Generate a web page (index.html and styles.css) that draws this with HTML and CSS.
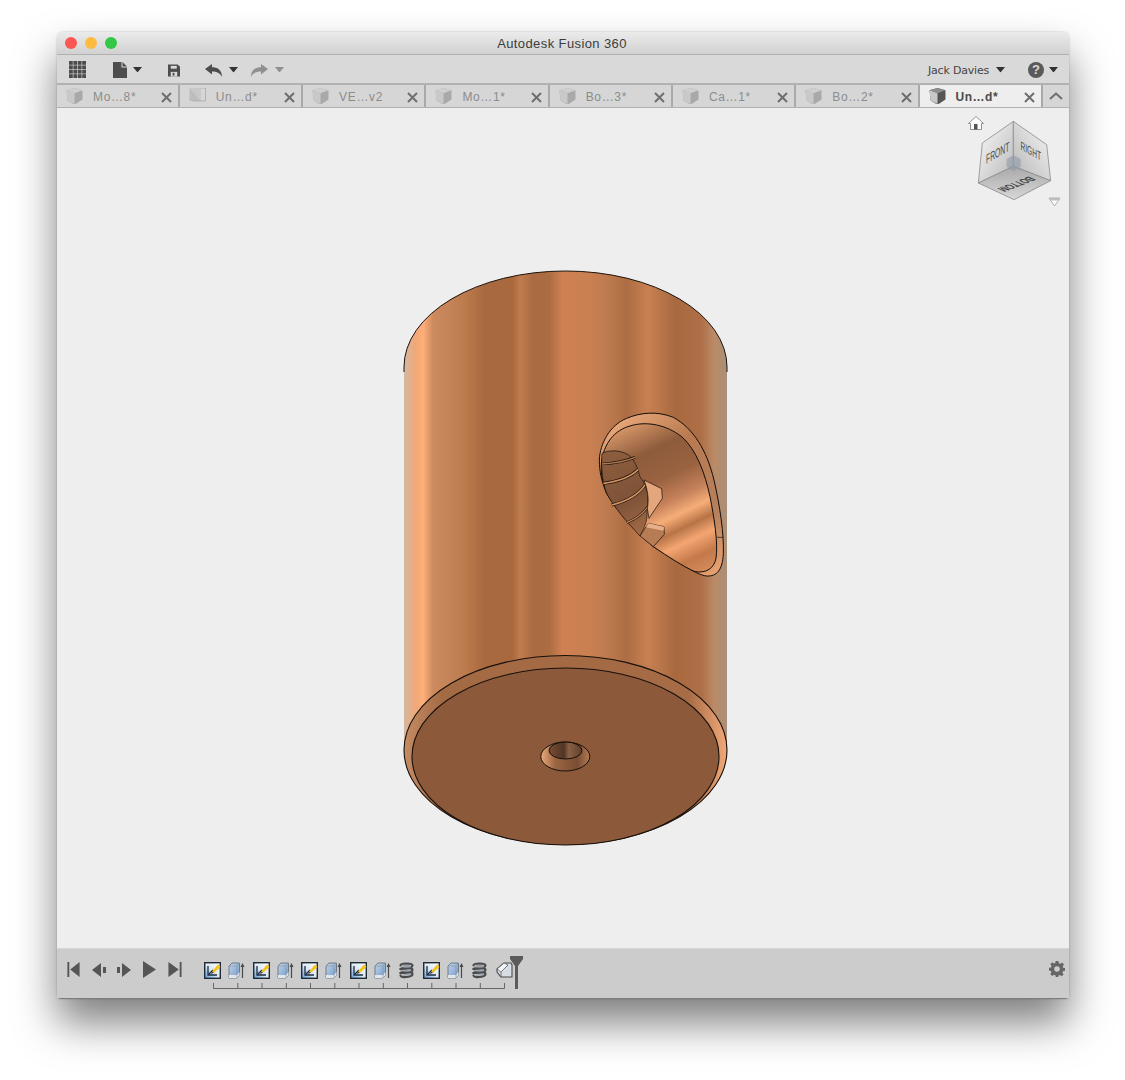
FILE: index.html
```html
<!DOCTYPE html>
<html lang="en">
<head>
<meta charset="utf-8">
<title>Autodesk Fusion 360</title>
<link rel="stylesheet" href="styles.css">
</head>
<body>
<svg class="defs" width="0" height="0" aria-hidden="true">
  <defs>
    <linearGradient id="sketchBg" x1="1" y1="0" x2="0" y2="1"><stop offset="0" stop-color="#fff"/><stop offset=".55" stop-color="#dbe7f3"/><stop offset="1" stop-color="#5f9bd6"/></linearGradient>
    <linearGradient id="extrudeBg" x1="0" y1="0" x2="1" y2="1"><stop offset="0" stop-color="#c3d6ec"/><stop offset="1" stop-color="#7098c8"/></linearGradient>
    <symbol id="cube" viewBox="1 1 14 14">
      <path d="M1 3 8 1 15 3 15 11 9 15 7 15 2 12Z" fill="#a9a9a9"/>
      <path d="M1 3 8 5.500 15 3 8 1Z" fill="#cfcfcf"/>
      <path d="M1 3 8 5.500 8 15 2 12Z" fill="#c9c9c9"/>
    </symbol>
    <symbol id="cube-active" viewBox="1 1 14 14">
      <path d="M1 3 8 1 15 3 15 11 9 15 7 15 2 12Z" fill="#555"/>
      <path d="M1 3 8 5.500 15 3 8 1Z" fill="#8d8d8d"/>
      <path d="M1 3 8 5.500 8 15 2 12Z" fill="#c8c8c8"/>
    </symbol>
    <symbol id="plane" viewBox="0 0 16 16">
      <path d="M0 0 11 0 11 13 0 13Z" fill="#bdbdbd"/>
      <path d="M0 0 11 0 11 13Z" fill="#c8c8c8"/>
      <path d="M11 0 16 0 16 13 3 13" fill="none" stroke="#aaa" stroke-width=".8"/>
    </symbol>
    <symbol id="close" viewBox="0 0 11 11">
      <path d="M1 1 10 10M10 1 1 10" stroke="#6e6e6e" stroke-width="2" fill="none"/>
    </symbol>
    <symbol id="caret" viewBox="0 0 10 6">
      <path d="M0 0H10L5 6Z"/>
    </symbol>
    <symbol id="sketch" viewBox="0 0 17 17">
      <rect x=".7" y=".7" width="15.600" height="15.600" fill="url(#sketchBg)" stroke="#1f2a36" stroke-width="1.400"/>
      <path d="M4 4V13H13" fill="none" stroke="#1d2c40" stroke-width="1.300"/>
      <path d="M4.500 12.500 9 8" stroke="#1d2c40" stroke-width="1.300"/>
      <path d="M8 9.500 14 2.500 16.500 5 10 10.800Z" fill="#f3c316"/>
      <path d="M8 9.500 10 10.800 6.800 12Z" fill="#444"/>
    </symbol>
    <symbol id="extrude" viewBox="0 0 17 17">
      <path d="M1 4 4 1 11.500 1 11.500 13 9 16 1 16Z" fill="url(#extrudeBg)" stroke="#68727e" stroke-width=".9"/>
      <path d="M1 13H9L11.500 10V13L9 16H1Z" fill="#e2e6ea"/>
      <path d="M1 4H9V16M9 4 11.500 1" fill="none" stroke="#8a96a3" stroke-width=".7"/>
      <path d="M14.500 16V3" stroke="#4a4a4a" stroke-width="1.200"/>
      <path d="M12.500 5 14.500 1 16.500 5Z" fill="#4a4a4a"/>
    </symbol>
    <symbol id="coil" viewBox="0 0 15 17">
      <ellipse cx="7.500" cy="8.500" rx="5.500" ry="7.500" fill="#9aa0a8"/>
      <g fill="none" stroke-linecap="round" stroke="#4b4b4b" stroke-width="2.200">
        <path d="M1.500 3.500C1.500 .8 13.500 .8 13.500 3.500S1.500 7 1.500 7"/>
        <path d="M1.500 7C4 5.600 13.500 5 13.500 8S1.500 11 1.500 11"/>
        <path d="M1.500 11C4 9.600 13.500 9 13.500 12S1.500 16.500 1.500 13.500"/>
      </g>
      <path d="M3 4.600C6 5.400 9 5.400 12 4.600M3 8.600C6 9.400 9 9.400 12 8.600M3 12.600C6 13.400 9 13.400 12 12.600" fill="none" stroke="#b9c4d0" stroke-width=".8"/>
    </symbol>
    <symbol id="fillet" viewBox="0 0 17 17">
      <path d="M1 7 8 1 15 1 16 3 16 15 5 15 1 10Z" fill="#d8dde5" stroke="#4b4b4b" stroke-width="1.100"/>
      <path d="M1 7 5 10 12 3 8 1Z" fill="#f2f4f7" stroke="#4b4b4b" stroke-width=".7"/>
      <path d="M5 10V15" stroke="#4b4b4b" stroke-width=".7"/>
    </symbol>
  </defs>
</svg>

<main class="window">
  <header class="titlebar">
    <div class="lights"><i class="light red"></i><i class="light yellow"></i><i class="light green"></i></div>
    <div class="title">Autodesk Fusion 360</div>
  </header>

  <nav class="toolbar">
    <svg class="ico-grid" viewBox="0 0 17 17">
      <g fill="#4d4d4d">
        <rect x="0" y="0" width="3.800" height="3.800"/><rect x="4.400" y="0" width="3.800" height="3.800"/><rect x="8.800" y="0" width="3.800" height="3.800"/><rect x="13.200" y="0" width="3.800" height="3.800"/>
        <rect x="0" y="4.400" width="3.800" height="3.800"/><rect x="4.400" y="4.400" width="3.800" height="3.800"/><rect x="8.800" y="4.400" width="3.800" height="3.800"/><rect x="13.200" y="4.400" width="3.800" height="3.800"/>
        <rect x="0" y="8.800" width="3.800" height="3.800"/><rect x="4.400" y="8.800" width="3.800" height="3.800"/><rect x="8.800" y="8.800" width="3.800" height="3.800"/><rect x="13.200" y="8.800" width="3.800" height="3.800"/>
        <rect x="0" y="13.200" width="3.800" height="3.800"/><rect x="4.400" y="13.200" width="3.800" height="3.800"/><rect x="8.800" y="13.200" width="3.800" height="3.800"/><rect x="13.200" y="13.200" width="3.800" height="3.800"/>
      </g>
    </svg>
    <svg class="ico-doc" viewBox="0 0 14 16"><path d="M0 0H8.500V5.500H14V16H0Z" fill="#4d4d4d"/><path d="M9.500 0 14 4.500H9.500Z" fill="#4d4d4d"/></svg>
    <svg class="caret caret-doc"><use href="#caret"/></svg>
    <svg class="ico-save" viewBox="0 0 13 13"><path d="M0 0H10.500L13 2.500V13H0Z" fill="#4d4d4d"/><rect x="3" y="1.500" width="6.500" height="3" fill="#d9d9d9"/><rect x="3" y="8" width="7" height="5" fill="#d9d9d9"/><rect x="5" y="9" width="2" height="3" fill="#4d4d4d"/></svg>
    <svg class="ico-arrow ico-undo" viewBox="0 0 17 13"><path d="M0 5 7 0V3.200C12 3.200 17 5.500 17 13 15 9 12 7.500 7 7.500V10.500Z" fill="#4d4d4d"/></svg>
    <svg class="caret caret-undo"><use href="#caret"/></svg>
    <svg class="ico-arrow ico-redo" viewBox="0 0 17 13"><path d="M17 5 10 0V3.200C5 3.200 0 5.500 0 13 2 9 5 7.500 10 7.500V10.500Z" fill="#8f8f8f"/></svg>
    <svg class="caret caret-redo"><use href="#caret"/></svg>
    <span class="user">Jack Davies</span>
    <svg class="caret caret-user"><use href="#caret"/></svg>
    <span class="help">?</span>
    <svg class="caret caret-help"><use href="#caret"/></svg>
  </nav>

  <div class="tabs">
    <div class="tab"><svg class="tab-icon"><use href="#cube"/></svg><span class="tab-label">Mo…8*</span><svg class="tab-close"><use href="#close"/></svg></div>
    <div class="tab"><svg class="tab-icon"><use href="#plane"/></svg><span class="tab-label">Un…d*</span><svg class="tab-close"><use href="#close"/></svg></div>
    <div class="tab"><svg class="tab-icon"><use href="#cube"/></svg><span class="tab-label">VE…v2</span><svg class="tab-close"><use href="#close"/></svg></div>
    <div class="tab"><svg class="tab-icon"><use href="#cube"/></svg><span class="tab-label">Mo…1*</span><svg class="tab-close"><use href="#close"/></svg></div>
    <div class="tab"><svg class="tab-icon"><use href="#cube"/></svg><span class="tab-label">Bo…3*</span><svg class="tab-close"><use href="#close"/></svg></div>
    <div class="tab"><svg class="tab-icon"><use href="#cube"/></svg><span class="tab-label">Ca…1*</span><svg class="tab-close"><use href="#close"/></svg></div>
    <div class="tab"><svg class="tab-icon"><use href="#cube"/></svg><span class="tab-label">Bo…2*</span><svg class="tab-close"><use href="#close"/></svg></div>
    <div class="tab tab-active"><svg class="tab-icon"><use href="#cube-active"/></svg><span class="tab-label">Un…d*</span><svg class="tab-close"><use href="#close"/></svg></div>
    <div class="tab-collapse"><svg viewBox="0 0 14 8"><path d="M1 7 7 1.500 13 7" fill="none" stroke="#6e6e6e" stroke-width="2"/></svg></div>
  </div>

  <section class="viewport">
    <svg class="model" viewBox="57 108 1012 840">
      <defs>
        <linearGradient id="body" gradientUnits="userSpaceOnUse" x1="404" y1="0" x2="727" y2="0">
          <stop offset="0" stop-color="#d2b8a2"/>
          <stop offset=".035" stop-color="#f0a878"/>
          <stop offset=".06" stop-color="#ffae78"/>
          <stop offset=".09" stop-color="#cc8a5e"/>
          <stop offset=".16" stop-color="#c08055"/>
          <stop offset=".19" stop-color="#bd7a4c"/>
          <stop offset=".25" stop-color="#a8693f"/>
          <stop offset=".335" stop-color="#a8693f"/>
          <stop offset=".36" stop-color="#c07c4e"/>
          <stop offset=".4" stop-color="#aa6b42"/>
          <stop offset=".45" stop-color="#ab6c42"/>
          <stop offset=".49" stop-color="#cf8152"/>
          <stop offset=".58" stop-color="#c98052"/>
          <stop offset=".63" stop-color="#bd7a4e"/>
          <stop offset=".69" stop-color="#ad6d44"/>
          <stop offset=".755" stop-color="#c88052"/>
          <stop offset=".79" stop-color="#ba774a"/>
          <stop offset=".84" stop-color="#a8693f"/>
          <stop offset=".92" stop-color="#ae6f47"/>
          <stop offset=".96" stop-color="#bb8a66"/>
          <stop offset="1" stop-color="#a89078"/>
        </linearGradient>
        <linearGradient id="rim" gradientUnits="userSpaceOnUse" x1="404" y1="0" x2="727" y2="0">
          <stop offset="0" stop-color="#c48c64"/>
          <stop offset=".12" stop-color="#a46a44"/>
          <stop offset=".6" stop-color="#a46a44"/>
          <stop offset=".88" stop-color="#a66c46"/>
          <stop offset=".97" stop-color="#e09a6c"/>
          <stop offset="1" stop-color="#f0a878"/>
        </linearGradient>
        <linearGradient id="cavity" gradientUnits="userSpaceOnUse" x1="110" y1="40" x2="340" y2="520">
          <stop offset="0" stop-color="#eba873"/>
          <stop offset=".1" stop-color="#c78a5f"/>
          <stop offset=".25" stop-color="#8d5c3c"/>
          <stop offset=".42" stop-color="#9a6240"/>
          <stop offset=".55" stop-color="#c5815a"/>
          <stop offset=".64" stop-color="#f6ad78"/>
          <stop offset=".72" stop-color="#b87446"/>
          <stop offset=".8" stop-color="#f4a672"/>
          <stop offset=".9" stop-color="#c4794a"/>
          <stop offset="1" stop-color="#d48c5c"/>
        </linearGradient>
        <linearGradient id="lip" gradientUnits="userSpaceOnUse" x1="40" y1="60" x2="400" y2="500">
          <stop offset="0" stop-color="#f0ae80"/>
          <stop offset=".35" stop-color="#b97a50"/>
          <stop offset=".75" stop-color="#b4805e"/>
          <stop offset="1" stop-color="#e8a070"/>
        </linearGradient>
        <linearGradient id="thread" gradientUnits="userSpaceOnUse" x1="40" y1="150" x2="170" y2="400">
          <stop offset="0" stop-color="#8e5e3e"/>
          <stop offset=".6" stop-color="#7e5338"/>
          <stop offset="1" stop-color="#a56c46"/>
        </linearGradient>
        <linearGradient id="bore" gradientUnits="userSpaceOnUse" x1="549" y1="0" x2="582" y2="0">
          <stop offset="0" stop-color="#7a4e32"/>
          <stop offset=".45" stop-color="#4f3526"/>
          <stop offset=".6" stop-color="#8a6044"/>
          <stop offset="1" stop-color="#60402c"/>
        </linearGradient>
        <linearGradient id="cone" gradientUnits="userSpaceOnUse" x1="540" y1="0" x2="590" y2="0">
          <stop offset="0" stop-color="#f0ae80"/>
          <stop offset=".3" stop-color="#9c6542"/>
          <stop offset=".75" stop-color="#7a4e34"/>
          <stop offset="1" stop-color="#b47c54"/>
        </linearGradient>
      </defs>

      <path d="M404 367A161.500 96 0 0 1 727 367V750A161.500 94.500 0 0 1 404 750Z" fill="url(#body)"/>
      <path d="M404 372V367A161.500 96 0 0 1 727 367V372" fill="none" stroke="#1c120c" stroke-width="1"/>

      <ellipse cx="565.500" cy="750" rx="161.500" ry="94.500" fill="url(#rim)" stroke="#17100b" stroke-width="1.100"/>
      <ellipse cx="565.500" cy="756.500" rx="153.500" ry="88.500" fill="#8c5a3a" stroke="#17100b" stroke-width="1.100"/>
      <ellipse cx="565.300" cy="756.500" rx="24.500" ry="14.500" fill="url(#cone)" stroke="#17100b" stroke-width="1"/>
      <ellipse cx="565.500" cy="750.500" rx="16.500" ry="8.500" fill="url(#bore)" stroke="#17100b" stroke-width="1"/>

      <g transform="translate(590 400) scale(.33333)" stroke="#130d09" stroke-width="3" stroke-linejoin="round">
        <path d="M28 180C30 130 60 75 110 55 150 38 200 32 250 52 310 85 350 150 372 240 390 320 402 400 400 460 398 510 380 530 350 528 320 525 270 490 190 440 130 390 80 330 50 280 35 245 28 215 28 180Z" fill="url(#lip)"/>
        <path d="M34 190C40 130 75 90 120 78 170 62 230 75 275 110 320 150 345 220 360 290 372 350 385 430 378 475 372 505 350 520 315 515 280 500 235 470 190 440 130 390 80 330 50 280 38 250 32 220 34 190Z" fill="url(#cavity)"/>
        <path d="M36 160C60 148 100 150 122 170 140 190 145 215 150 230 170 255 178 290 172 325 170 350 175 362 150 408 110 365 70 320 50 280 38 250 32 200 36 160Z" fill="url(#thread)" stroke-width="2"/>
        <g fill="none" stroke-linecap="butt">
          <path d="M36 192C70 190 105 185 135 172" stroke="#1e130c" stroke-width="8"/>
          <path d="M36 192C70 190 105 185 135 172" stroke="#b27a52" stroke-width="4"/>
          <path d="M40 250C80 245 120 232 145 208" stroke="#1e130c" stroke-width="9"/>
          <path d="M40 250C80 245 120 232 145 208" stroke="#d2925f" stroke-width="5"/>
          <path d="M65 315C105 305 145 285 165 255" stroke="#1e130c" stroke-width="9"/>
          <path d="M65 315C105 305 145 285 165 255" stroke="#d2925f" stroke-width="5"/>
          <path d="M110 368C135 358 160 340 175 318" stroke="#1e130c" stroke-width="7"/>
          <path d="M110 368C135 358 160 340 175 318" stroke="#c88a5e" stroke-width="3.500"/>
        </g>
        <path d="M162 240 215 266 217 295 177 355 172 325C178 295 172 268 162 240Z" fill="#e4a67c" stroke-width="2"/>
        <path d="M150 408 175 370 222 380 223 403 190 440Z" fill="#b87c54" stroke-width="2"/>
        <path d="M175 370 222 380 221 392 168 382Z" fill="#e8b08a" stroke="none"/>
        <path d="M380 412H400" fill="none" stroke-width="2"/>
      </g>
    </svg>

    <svg class="navcube" viewBox="0 0 120 110">
      <defs>
        <linearGradient id="faceL" x1="0" y1="0" x2="1" y2="1"><stop offset="0" stop-color="#fafafa"/><stop offset="1" stop-color="#b9b9b9"/></linearGradient>
        <linearGradient id="faceR" x1="1" y1="0" x2="0" y2="1"><stop offset="0" stop-color="#f7f7f7"/><stop offset="1" stop-color="#b6b6b6"/></linearGradient>
        <linearGradient id="faceB" x1="0" y1="0" x2="0" y2="1"><stop offset="0" stop-color="#a8a8a8"/><stop offset="1" stop-color="#d8d8d8"/></linearGradient>
      </defs>
      <g transform="scale(.33333)">
        <path d="M190 40 97 105 85 225 190 175Z" fill="url(#faceL)" stroke="#8e8e8e" stroke-width="2.500"/>
        <path d="M190 40 290 110 302 218 190 175Z" fill="url(#faceR)" stroke="#8e8e8e" stroke-width="2.500"/>
        <path d="M85 225 190 175 302 218 192 275Z" fill="url(#faceB)" stroke="#8e8e8e" stroke-width="2.500"/>
        <path d="M190 142 212 153 212 176 190 190 170 176 170 153Z" fill="#8d99a8" opacity=".6"/>
      </g>
      <text class="cube-label" transform="matrix(.52 -.3 0 1 36 56)">FRONT</text>
      <text class="cube-label cube-label-sm" transform="matrix(.55 .3 0 1 70.500 41.500)">RIGHT</text>
      <text class="cube-label cube-label-bottom" transform="matrix(-.67 .26 -1 -.45 78.700 68.200)">BOTTOM</text>
      <path d="M26 8.500 18.500 15.500H20.500V21.500H31.500V15.500H33.500Z" fill="#fff" stroke="#777" stroke-width=".8"/>
      <rect x="24" y="16" width="3.500" height="5.500" fill="#555"/>
      <path d="M99 90H110L104.500 98Z" fill="#fff" stroke="#9a9a9a" stroke-width=".8"/>
      <path d="M99 90H110L109 92.500H100Z" fill="#bdbdbd"/>
    </svg>
  </section>

  <footer class="timeline">
    <div class="controls">
      <svg class="ctl ctl-first" viewBox="0 0 13 16"><path d="M0 0H2V16H0ZM13 0V16L3 8Z" fill="#555"/></svg>
      <svg class="ctl ctl-prev" viewBox="0 0 14 14"><path d="M9 0V14L0 7ZM11 4H14V10H11Z" fill="#555"/></svg>
      <svg class="ctl ctl-next" viewBox="0 0 14 14"><path d="M5 0V14L14 7ZM0 4H3V10H0Z" fill="#555"/></svg>
      <svg class="ctl ctl-play" viewBox="0 0 13 17"><path d="M0 0 13 8.500 0 17Z" fill="#555"/></svg>
      <svg class="ctl ctl-last" viewBox="0 0 14 16"><path d="M12 0H14V16H12ZM0 0V16L11 8Z" fill="#555"/></svg>
    </div>
    <div class="track">
      <div class="features">
        <svg class="feat"><use href="#sketch"/></svg>
        <svg class="feat"><use href="#extrude"/></svg>
        <svg class="feat"><use href="#sketch"/></svg>
        <svg class="feat"><use href="#extrude"/></svg>
        <svg class="feat"><use href="#sketch"/></svg>
        <svg class="feat"><use href="#extrude"/></svg>
        <svg class="feat"><use href="#sketch"/></svg>
        <svg class="feat"><use href="#extrude"/></svg>
        <svg class="feat"><use href="#coil"/></svg>
        <svg class="feat"><use href="#sketch"/></svg>
        <svg class="feat"><use href="#extrude"/></svg>
        <svg class="feat"><use href="#coil"/></svg>
        <svg class="feat"><use href="#fillet"/></svg>
      </div>
      <svg class="rail" viewBox="0 0 292 6">
        <path d="M.5 0V5.500H291.500V0M24.800 0V5M49 0V5M73.300 0V5M97.500 0V5M121.800 0V5M146 0V5M170.300 0V5M194.500 0V5M218.800 0V5M243 0V5M267.300 0V5" fill="none" stroke="#666" stroke-width="1"/>
      </svg>
      <svg class="marker" viewBox="0 0 13 33"><path d="M0 0H13V3L8 10V33H5V10L0 3Z" fill="#5b5b5b"/></svg>
    </div>
    <svg class="gear" viewBox="0 0 16 16">
      <path fill="#666" fill-rule="evenodd" d="M6.600 0H9.400L9.800 2.200 11.300 2.800 13.100 1.500 15 3.400 13.700 5.200 14.200 6.700 16 7V9.800L14 10.200 13.400 11.600 14.600 13.400 12.700 15.300 10.900 14 9.500 14.600 9.200 16H6.800L6.400 14.300 5 13.800 3.200 15 1.200 13.100 2.500 11.300 1.900 9.900 0 9.500V6.800L2 6.400 2.600 5 1.300 3.200 3.200 1.300 5 2.500 6.300 2Z M8 5.200A2.800 2.800 0 1 0 8 10.800 2.800 2.800 0 1 0 8 5.200Z"/>
    </svg>
  </footer>
</main>
</body>
</html>
```

FILE: styles.css
```css
* { box-sizing: border-box; }

html, body {
  margin: 0;
  height: 1080px;
  background: #fff;
  overflow: hidden;
}

body {
  padding: 32px 56px 0 57px;
  font-family: "Liberation Sans", Arial, sans-serif;
}

.defs { position: absolute; }

.window {
  width: 1012px;
  height: 967px;
  display: flex;
  flex-direction: column;
  border-radius: 6px 6px 4px 4px;
  box-shadow: 0 24px 42px rgba(0, 0, 0, .5), 0 0 2px rgba(0, 0, 0, .25);
  overflow: hidden;
}

.titlebar {
  position: relative;
  height: 23px;
  flex: none;
  display: flex;
  align-items: center;
  justify-content: center;
  background: linear-gradient(#ebebeb, #d1d1d1);
  border-bottom: 1px solid #b1b1b1;
}

.lights {
  position: absolute;
  left: 8px;
  top: 5px;
  display: flex;
  gap: 8px;
}

.light {
  width: 12px;
  height: 12px;
  border-radius: 50%;
}
.red { background: #fc5753; }
.yellow { background: #fdbc40; }
.green { background: #33c748; }

.title {
  font-size: 13px;
  color: #3c3c3c;
  letter-spacing: .4px;
  padding-top: 1px;
  padding-right: 2px;
}

.toolbar {
  height: 30px;
  flex: none;
  display: flex;
  align-items: center;
  padding: 2px 0 0 12px;
  background: #d9d9d9;
  border-bottom: 2px solid #b1b1b1;
}

.caret { width: 9px; height: 5.500px; flex: none; fill: #333; }

.ico-grid { width: 17px; height: 17px; flex: none; margin-bottom: 1px; }
.ico-doc { width: 14px; height: 16px; flex: none; margin-left: 27px; }
.caret-doc { margin-left: 6px; margin-bottom: 1px; }
.ico-save { width: 12px; height: 13px; flex: none; margin-left: 26px; }
.ico-arrow { width: 17px; height: 13px; flex: none; }
.ico-undo { margin-left: 25px; }
.caret-undo { margin-left: 7px; }
.ico-redo { margin-left: 13px; }
.caret-redo { margin-left: 7px; fill: #8f8f8f; }

.user {
  margin-left: auto;
  font-family: "DejaVu Sans", sans-serif;
  font-size: 11px;
  color: #444;
  letter-spacing: -.2px;
}
.caret-user { margin-left: 7px; }

.help {
  margin-left: 23px;
  width: 16px;
  height: 16px;
  flex: none;
  border-radius: 50%;
  background: #5a5a5a;
  color: #d9d9d9;
  font-size: 13px;
  font-weight: bold;
  line-height: 16px;
  text-align: center;
}
.caret-help { margin-left: 5px; margin-right: 11px; }

.tabs {
  height: 23px;
  flex: none;
  display: flex;
  padding: 0;
  background: #d6d6d6;
  border-bottom: 1px solid #b1b1b1;
}

.tab {
  width: 123.300px;
  flex: none;
  display: flex;
  align-items: center;
  padding-left: 9px;
  border-right: 2px solid #a9a9a9;
}
.tab:first-child { width: 122.800px; }

.tab-icon { width: 17px; height: 16px; flex: none; margin-bottom: 1px; }

.tab-label {
  margin-left: 10px;
  font-size: 12px;
  letter-spacing: .65px;
  color: #8c8c8c;
  padding-top: 2px;
}

.tab-close { width: 11px; height: 11px; flex: none; margin-left: auto; margin-right: 6px; margin-top: 3px; }

.tab-active { background: #eeeeee; }
.tab-active .tab-label { color: #4a4a4a; font-weight: bold; letter-spacing: .5px; }

.tab-collapse {
  flex: 1;
  display: flex;
  align-items: center;
  justify-content: center;
}
.tab-collapse svg { width: 14px; height: 8px; }

.viewport {
  position: relative;
  flex: 1;
  background: #eeeeee;
  min-height: 0;
}

.model { display: block; width: 100%; height: 100%; }

.navcube {
  position: absolute;
  top: 0;
  left: 893px;
  width: 120px;
  height: 110px;
}

.cube-label {
  font-family: "Liberation Sans", Arial, sans-serif;
  font-size: 13px;
  fill: #4a4a4a;
}
.cube-label-sm { font-size: 12px; }
.cube-label-bottom { font-size: 11px; font-weight: bold; fill: #3f3f3f; }

.timeline {
  height: 51px;
  flex: none;
  display: flex;
  align-items: flex-start;
  background: #cccccc;
  border-top: 1px solid #d6d6d6;
  border-bottom: 1px solid #7d7d7d;
  position: relative;
}

.controls {
  display: flex;
  align-items: center;
  height: 17px;
  margin: 12px 0 0 10px;
  flex: none;
}

.ctl { flex: none; }
.ctl-first { width: 13px; height: 15px; }
.ctl-prev { width: 14px; height: 14px; margin-left: 12px; }
.ctl-next { width: 14px; height: 14px; margin-left: 11px; }
.ctl-play { width: 13px; height: 17px; margin-left: 12px; }
.ctl-last { width: 14px; height: 15px; margin-left: 12px; }

.track {
  position: relative;
  margin: 13px 0 0 22px;
  flex: none;
}

.features { display: flex; gap: 7.300px; }
.feat { width: 17px; height: 17px; flex: none; }

.rail {
  display: block;
  width: 292px;
  height: 6px;
  margin: 4px 0 0 9px;
}

.marker {
  position: absolute;
  left: 306px;
  top: -6px;
  width: 13px;
  height: 33px;
}

.gear {
  width: 16px;
  height: 16px;
  margin: 12px 4px 0 auto;
  flex: none;
}
```
